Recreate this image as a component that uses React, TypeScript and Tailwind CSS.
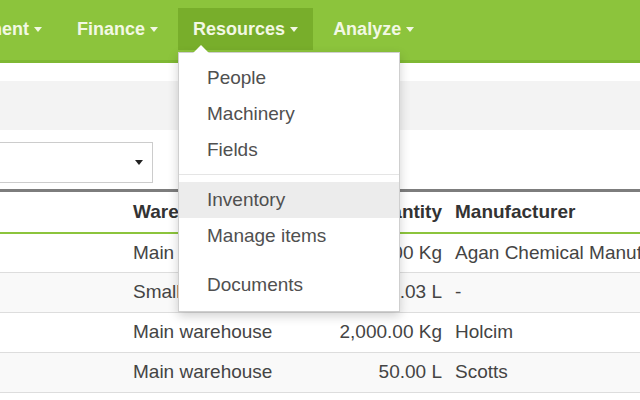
import React from "react";

const navItems = [
  { label: "Management", active: false },
  { label: "Finance", active: false },
  { label: "Resources", active: true },
  { label: "Analyze", active: false },
];

const rows = [
  { warehouse: "Main warehouse", qty: "1,000.00 Kg", maker: "Agan Chemical Manufacturers" },
  { warehouse: "Small warehouse", qty: "1,003.03 L", maker: "-" },
  { warehouse: "Main warehouse", qty: "2,000.00 Kg", maker: "Holcim" },
  { warehouse: "Main warehouse", qty: "50.00 L", maker: "Scotts" },
];

function Caret() {
  return (
    <span className="inline-block ml-[5px] w-0 h-0 border-t-[5px] border-t-current border-x-[4px] border-x-transparent" />
  );
}

function ResourcesMenu() {
  const item = "flex items-center h-[36px] pl-[28px] text-[19px] text-[#505050]";
  return (
    <div className="absolute left-[178px] top-[52px] w-[222px] bg-white border border-[#cfcfcf] shadow-[0_4px_10px_rgba(0,0,0,0.18)] pt-[7px] pb-[8px] z-10">
      <div className="absolute left-[15px] top-[-5px] w-[14px] h-[14px] rotate-45 bg-white" />
      <div className={item}>People</div>
      <div className={item}>Machinery</div>
      <div className={item}>Fields</div>
      <div className="mt-[6px] mb-[7px] h-px bg-[#e5e5e5]" />
      <div className={`${item} bg-[#ececec]`}>Inventory</div>
      <div className={item}>Manage items</div>
      <div className={`${item} mt-[13px]`}>Documents</div>
    </div>
  );
}

export default function App() {
  return (
    <div className="relative w-[640px] h-[400px] overflow-hidden bg-white font-['Liberation_Sans',Arial,sans-serif]">
      {/* Navbar */}
      <nav className="h-[63px] bg-[#8cc43c] border-b-[3px] border-[#7fb834]">
        <ul className="flex items-start h-full ml-[-96px] gap-[5px]">
          {navItems.map((n) => (
            <li
              key={n.label}
              className={`mt-[8px] h-[42px] px-[15px] flex items-center text-[18px] font-bold text-[#f2f8e4] whitespace-nowrap ${
                n.active ? "bg-[#78ae2b]" : ""
              }`}
            >
              {n.label}
              <Caret />
            </li>
          ))}
        </ul>
      </nav>

      {/* Breadcrumb band */}
      <div className="mt-[18px] h-[49px] bg-[#f3f3f3]" />

      {/* Filter select */}
      <div className="mt-[12px] w-[153px] h-[41px] border-y border-r border-[#cccccc] flex items-center justify-end pr-[9px]">
        <span className="w-0 h-0 border-t-[5px] border-t-[#222] border-x-[4px] border-x-transparent" />
      </div>

      {/* Table */}
      <table className="mt-[6px] w-[700px] table-fixed border-t-[3px] border-[#7d7d7d] text-[19px] text-[#444]">
        <colgroup>
          <col className="w-[125px]" />
          <col className="w-[175px]" />
          <col className="w-[150px]" />
          <col />
        </colgroup>
        <thead>
          <tr className="h-[42px] border-b-2 border-[#8cc43c] text-[#333]">
            <th />
            <th className="px-[8px] text-left font-bold whitespace-nowrap">Warehouse</th>
            <th className="px-[8px] text-right font-bold whitespace-nowrap">Quantity</th>
            <th className="px-[5px] text-left font-bold whitespace-nowrap">Manufacturer</th>
          </tr>
        </thead>
        <tbody>
          {rows.map((r, i) => (
            <tr key={i} className={`h-[40px] border-b border-[#dddddd] ${i % 2 === 1 ? "bg-[#f9f9f9]" : ""}`}>
              <td />
              <td className="px-[8px] whitespace-nowrap">{r.warehouse}</td>
              <td className="px-[8px] text-right whitespace-nowrap">{r.qty}</td>
              <td className="px-[5px] whitespace-nowrap overflow-hidden">{r.maker}</td>
            </tr>
          ))}
        </tbody>
      </table>

      <ResourcesMenu />
    </div>
  );
}
